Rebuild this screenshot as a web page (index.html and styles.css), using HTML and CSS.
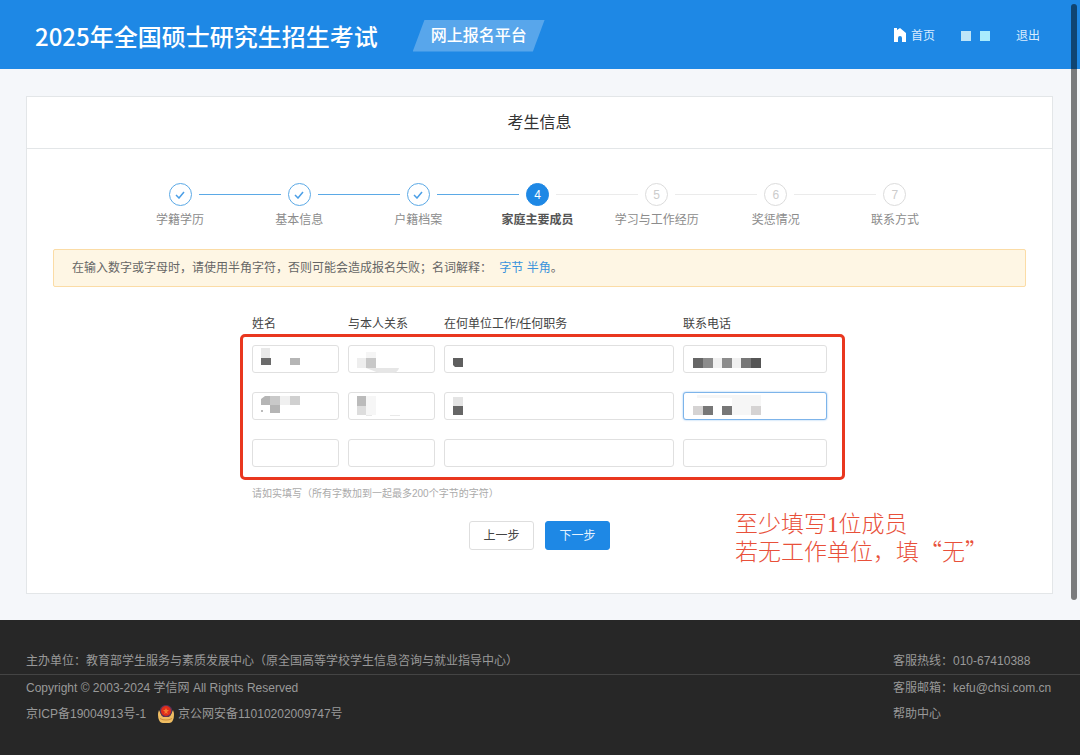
FILE: index.html
```html
<!DOCTYPE html>
<html lang="zh-CN">
<head>
<meta charset="utf-8">
<meta name="viewport" content="width=device-width, initial-scale=1">
<title>2025年全国硕士研究生招生考试网上报名平台</title>
<link rel="stylesheet" href="styles.css">
</head>
<body>
<header class="header">
  <h1 class="site-title">2025年全国硕士研究生招生考试</h1>
  <span class="site-badge">网上报名平台</span>
  <nav class="nav">
    <a class="nav-link" href="#">
      <svg class="home-icon" viewBox="0 0 14 15" width="14" height="15" aria-hidden="true"><path fill="#fff" d="M1 0h3v2l3-2 6 5v9H9v-4Q9 8 7 8t-2 2v4H1z"/></svg>首页</a>
    <span class="user"><span class="user-block"></span><span class="user-block user-block-cyan"></span></span>
    <a class="nav-link" href="#">退出</a>
  </nav>
</header>

<main class="main">
  <section class="card">
    <h2 class="card-title">考生信息</h2>
    <div class="card-body">
      <ol class="steps">
        <li class="step done"><div class="step-head"><span class="step-dot"><svg viewBox="0 0 10 8" width="10" height="8"><path d="M1 4l3 3 5-6"/></svg></span></div>学籍学历</li>
        <li class="step done"><div class="step-head"><span class="step-dot"><svg viewBox="0 0 10 8" width="10" height="8"><path d="M1 4l3 3 5-6"/></svg></span></div>基本信息</li>
        <li class="step done"><div class="step-head"><span class="step-dot"><svg viewBox="0 0 10 8" width="10" height="8"><path d="M1 4l3 3 5-6"/></svg></span></div>户籍档案</li>
        <li class="step current"><div class="step-head"><span class="step-dot">4</span></div>家庭主要成员</li>
        <li class="step"><div class="step-head"><span class="step-dot">5</span></div>学习与工作经历</li>
        <li class="step"><div class="step-head"><span class="step-dot">6</span></div>奖惩情况</li>
        <li class="step"><div class="step-head"><span class="step-dot">7</span></div>联系方式</li>
      </ol>

      <p class="notice">在输入数字或字母时，请使用半角字符，否则可能会造成报名失败；名词解释： <a href="#">字节</a> <a href="#">半角</a>。</p>

      <form class="form">
        <div class="grid labels">
          <label for="name1">姓名</label>
          <label for="relation1">与本人关系</label>
          <label for="work1">在何单位工作/任何职务</label>
          <label for="phone1">联系电话</label>
        </div>
        <div class="frame">
          <div class="grid">
            <div class="cell"><input id="name1" type="text">
              <svg class="mask" width="87" height="28" aria-hidden="true"><path fill="#e8e8e8" d="M9 3h9v10H9z"/><path fill="#6b6b6b" d="M9 13h10v7H9z"/><path fill="#b5b5b5" d="M38 13h10v7H38z"/></svg></div>
            <div class="cell"><input id="relation1" type="text">
              <svg class="mask" width="87" height="28" aria-hidden="true"><path fill="#f5f5f5" d="M18 7h10v6H18z"/><path fill="#eee" d="M9 13h9v10H9z"/><path fill="#c8c8c8" d="M18 13h10v10H18z"/><path fill="#e6e6e6" d="M18 23h33q-1 5-8 5H31z"/></svg></div>
            <div class="cell"><input id="work1" type="text">
              <svg class="mask" width="87" height="28" aria-hidden="true"><path fill="#5f5f5f" d="M9 13h10v9H11l-2-2z"/></svg></div>
            <div class="cell"><input id="phone1" type="text">
              <svg class="mask" width="100" height="28" aria-hidden="true"><path fill="#f0f0f0" d="M30 13h28v10H30z"/><path fill="#666" d="M10 13h10v10H10z"/><path fill="#8c8c8c" d="M20 13h10v10H20zM39 13h10v10H39z"/><path fill="#777" d="M58 13h10v10H58z"/><path fill="#555" d="M68 13h10v10H68z"/></svg></div>

            <div class="cell"><input type="text" aria-label="姓名">
              <svg class="mask" width="87" height="28" aria-hidden="true"><path fill="#b5b5b5" d="M13 4h5v9H9V7zM18 13h10v8H18z"/><path fill="#c9c9c9" d="M18 4h10v9H18z"/><path fill="#f0f0f0" d="M28 4h10v9H28z"/><path fill="#d0d0d0" d="M38 4h10v9H38z"/><path fill="#bbb" d="M9 18h2v2H9z"/></svg></div>
            <div class="cell"><input type="text" aria-label="与本人关系">
              <svg class="mask" width="87" height="28" aria-hidden="true"><path fill="#bbb" d="M9 4h9v10H9z"/><path fill="#ddd" d="M9 14h9v9H9z"/><path fill="#f6f6f6" d="M18 4h10v19H18z"/><path fill="#e9e9e9" d="M18 23h6v1h-6zM42 23h10v1H42z"/></svg></div>
            <div class="cell"><input type="text" aria-label="在何单位工作/任何职务">
              <svg class="mask" width="87" height="28" aria-hidden="true"><path fill="#e4e4e4" d="M9 5h10v9H9z"/><path fill="#666" d="M9 14h10v9H9z"/></svg></div>
            <div class="cell"><input class="focused" type="text" aria-label="联系电话">
              <svg class="mask" width="100" height="28" aria-hidden="true"><path fill="#f6f6f6" d="M14 3h64v3H14zM49 6h29v8H49zM49 14h19v9H49z"/><path fill="#d5d3d3" d="M10 14h10v9H10zM68 14h10v9H68z"/><path fill="#777" d="M20 14h10v9H20zM39 14h10v9H39z"/></svg></div>

            <div class="cell"><input type="text" aria-label="姓名"></div>
            <div class="cell"><input type="text" aria-label="与本人关系"></div>
            <div class="cell"><input type="text" aria-label="在何单位工作/任何职务"></div>
            <div class="cell"><input type="text" aria-label="联系电话"></div>
          </div>
        </div>
        <p class="hint">请如实填写（所有字数加到一起最多200个字节的字符）</p>
        <div class="actions">
          <button class="btn" type="button">上一步</button>
          <button class="btn btn-primary" type="button">下一步</button>
        </div>
      </form>
    </div>
    <p class="remark">至少填写<span class="remark-num">1</span>位成员<br>若无工作单位，填“无”</p>
  </section>
</main>

<footer class="footer">
  <div class="footer-row footer-line"><span>主办单位：教育部学生服务与素质发展中心（原全国高等学校学生信息咨询与就业指导中心）</span><span class="contact">客服热线：010-67410388</span></div>
  <div class="footer-row"><span>Copyright © 2003-2024 学信网 All Rights Reserved</span><span class="contact">客服邮箱：kefu@chsi.com.cn</span></div>
  <div class="footer-row">
    <span class="records"><a href="#">京ICP备19004913号-1</a>
      <a class="police" href="#"><svg viewBox="0 0 16 18" width="16" height="18" aria-hidden="true"><path fill="#efbd62" d="M1 5Q-1 10 1 15q1 3 4 3h6q3 0 4-3 2-5 0-10l-3 6H4z"/><path fill="#5b3358" d="M8 0q4 0 6 4 1 4-3 8H5Q1 8 2 4q2-4 6-4z"/><path fill="#c98a3c" d="M2 13q6 3 12 0v1q-6 3-12 0z"/><circle cx="8" cy="6" r="5" fill="#e02d1b"/><path fill="#f47b30" d="M8 3l1 2h2L9 7l1 2-2-1-2 1 1-2-2-2h2z"/></svg>京公网安备11010202009747号</a></span>
    <a class="contact" href="#">帮助中心</a>
  </div>
</footer>
<div class="scrollbar" aria-hidden="true"></div>
</body>
</html>
```
FILE: styles.css
```css
* {
  box-sizing: border-box;
}

body {
  margin: 0;
  min-height: 100vh;
  display: flex;
  flex-direction: column;
  background: #f5f7fa;
  color: #444;
  font: 12px/20px "Liberation Sans", "Noto Sans CJK SC", sans-serif;
}

h1, h2, p, ol {
  margin: 0;
  padding: 0;
}

a {
  color: inherit;
  text-decoration: none;
}

.header {
  display: flex;
  align-items: center;
  height: 69px;
  padding: 2px 40px 0 35px;
  background: #1e88e5;
  color: #fff;
}

.site-title {
  font-size: 24px;
  line-height: 36px;
  font-weight: 500;
  font-family: "Noto Sans CJK SC", sans-serif;
  white-space: nowrap;
}

.site-badge {
  margin-left: 35px;
  padding: 0 18px;
  background: rgba(255, 255, 255, 0.26);
  clip-path: polygon(9% 0, 100% 0, 91% 100%, 0 100%);
  font-size: 16px;
  line-height: 32px;
  font-weight: 500;
  white-space: nowrap;
}

.nav {
  display: flex;
  align-items: center;
  gap: 26px;
  margin-left: auto;
  color: #d9ecff;
}

.nav-link {
  display: flex;
  align-items: center;
  gap: 4px;
}

.user {
  display: flex;
  gap: 9px;
}

.user-block {
  width: 10px;
  height: 10px;
  background: #bfe5f8;
}

.user-block-cyan {
  background: #a9ecfd;
}

.main {
  padding: 27px 27px 26px 26px;
}

.card {
  position: relative;
  background: #fff;
  border: 1px solid #e3e6e8;
}

.card-title {
  padding: 14px 0 13px;
  border-bottom: 1px solid #e3e6e8;
  font-size: 16px;
  line-height: 24px;
  font-weight: 400;
  color: #333;
  text-align: center;
}

.card-body {
  padding: 34px 26px 43px;
}

.steps {
  display: flex;
  max-width: 838px;
  margin: 0 auto;
  padding-right: 4px;
  list-style: none;
}

.step {
  flex: 1;
  text-align: center;
  color: #8c8c8c;
}

.step-head {
  display: flex;
  align-items: center;
  gap: 7px;
  margin-bottom: 4px;
}

.step-head::before,
.step-head::after {
  content: "";
  flex: 1;
  height: 1px;
  background: #ebebeb;
}

.step:first-child .step-head::before,
.step:last-child .step-head::after {
  background: none;
}

.step-dot {
  display: flex;
  align-items: center;
  justify-content: center;
  width: 23px;
  height: 23px;
  border: 1px solid #dcdcdc;
  border-radius: 50%;
  color: #ccc;
}

.step-dot path {
  fill: none;
  stroke: #4a9ee6;
  stroke-width: 1.5;
}

.done .step-dot {
  border-color: #5ba9e6;
}

.done .step-head::after,
.done .step-head::before,
.current .step-head::before {
  background: #5ba9e6;
}

.current {
  color: #555;
  font-weight: 700;
}

.current .step-dot {
  border-color: #1e88e5;
  background: #1e88e5;
  color: #fff;
  font-weight: 400;
}

.notice {
  margin-top: 19px;
  padding: 8px 18px;
  border: 1px solid #fbdca6;
  border-radius: 2px;
  background: #fef6e4;
  color: #666;
}

.notice a {
  color: #3a93dc;
}

.notice a:first-child {
  margin-left: 4px;
}

.form {
  max-width: 575px;
  margin: 27px auto 0;
}

.grid {
  display: grid;
  grid-template-columns: 87fr 87fr 230fr 144fr;
  gap: 19px 9px;
}

.frame {
  margin: 0 -18px 0 -12px;
  padding: 8px 15px 10px 9px;
  border: 3px solid #e9371f;
  border-radius: 5px;
}

.cell {
  position: relative;
  display: flex;
}

.cell input {
  width: 100%;
  height: 28px;
  padding: 0 8px;
  border: 1px solid #e0e0e0;
  border-radius: 3px;
  background: #fff;
  font: inherit;
}

.cell .focused {
  border-color: #7db4ea;
  box-shadow: 0 0 2px #8bbdf0;
}

.mask {
  position: absolute;
  top: 0;
  left: 0;
  pointer-events: none;
}

.hint {
  margin-top: 4px;
  font-size: 10px;
  color: #aaa;
}

.actions {
  display: flex;
  justify-content: center;
  gap: 11px;
  margin-top: 17px;
}

.btn {
  width: 65px;
  height: 29px;
  padding: 0;
  border: 1px solid #dedede;
  border-radius: 3px;
  background: #fff;
  color: #444;
  font: inherit;
}

.btn-primary {
  border-color: #1e88e5;
  background: #1e88e5;
  color: #e4f2ff;
}

.remark {
  position: absolute;
  right: 64px;
  bottom: 29px;
  color: #e8503a;
  font: 300 23px/28px "Noto Sans CJK SC", sans-serif;
}

.remark-num {
  font-family: "Liberation Serif", serif;
  line-height: 1;
}

.footer {
  flex: 1;
  padding: 28px 0;
  background: #272727;
  color: #999;
}

.footer-row {
  display: flex;
  justify-content: space-between;
  padding: 0 27px 0 26px;
  line-height: 26px;
}

.footer-line {
  border-bottom: 1px solid #444;
}

.contact {
  width: 160px;
}

.records,
.police {
  display: flex;
  align-items: center;
}

.records {
  gap: 12px;
}

.police {
  gap: 4px;
}

.scrollbar {
  position: fixed;
  top: 4px;
  right: 3px;
  width: 6px;
  height: 79vh;
  border-radius: 3px;
  background: rgba(0, 0, 0, 0.5);
}
```
